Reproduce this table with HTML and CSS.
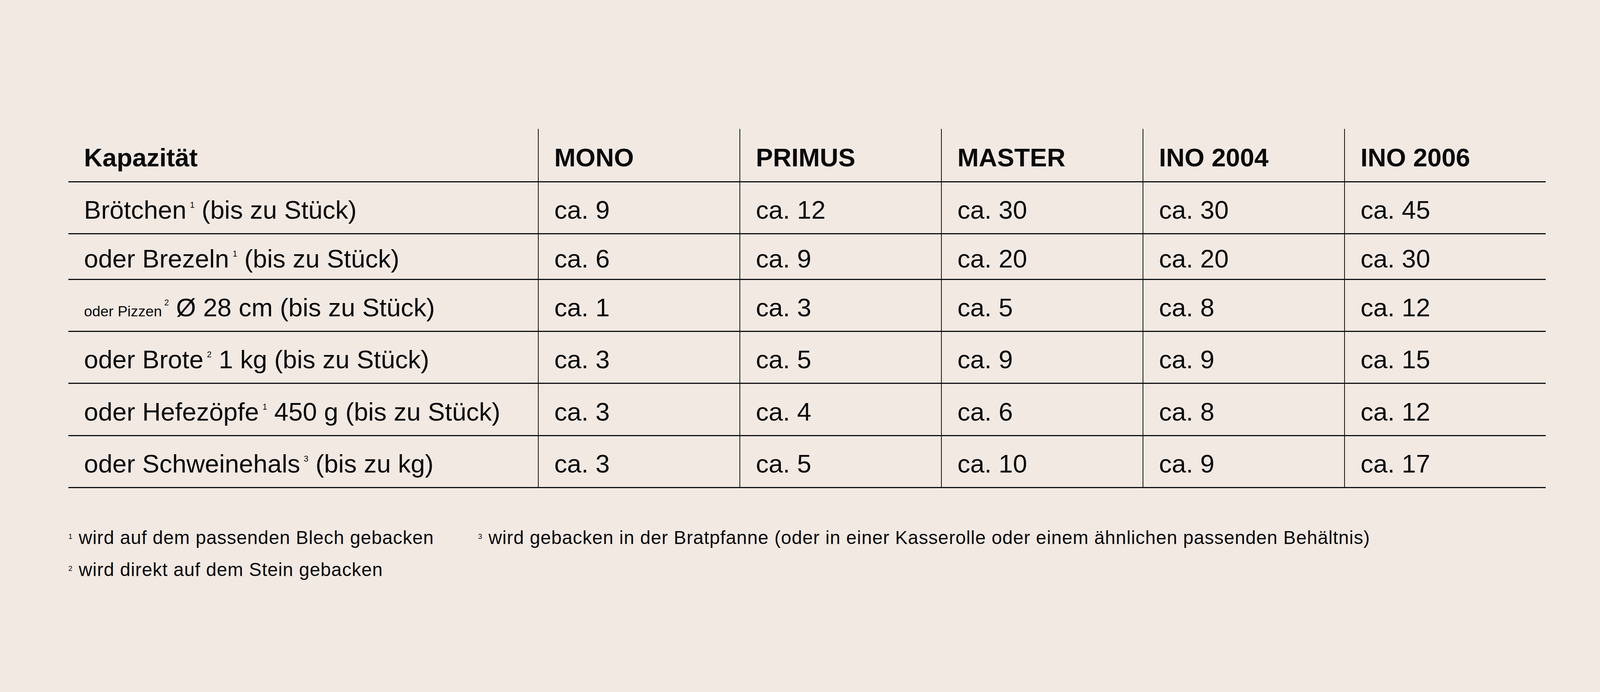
FILE: index.html
```html
<!DOCTYPE html>
<html lang="de">
<head>
<meta charset="utf-8">
<title>Kapazität</title>
<link rel="stylesheet" href="styles.css">
</head>
<body>
<main class="page">
  <table class="spec">
    <colgroup>
      <col class="col-label">
      <col><col><col><col><col>
    </colgroup>
    <thead>
      <tr>
        <th>Kapazität</th>
        <th>MONO</th>
        <th>PRIMUS</th>
        <th>MASTER</th>
        <th>INO 2004</th>
        <th>INO 2006</th>
      </tr>
    </thead>
    <tbody>
      <tr>
        <td>Brötchen<sup class="fn">1</sup> (bis zu Stück)</td>
        <td>ca. 9</td><td>ca. 12</td><td>ca. 30</td><td>ca. 30</td><td>ca. 45</td>
      </tr>
      <tr class="compact">
        <td>oder Brezeln<sup class="fn">1</sup> (bis zu Stück)</td>
        <td>ca. 6</td><td>ca. 9</td><td>ca. 20</td><td>ca. 20</td><td>ca. 30</td>
      </tr>
      <tr>
        <td><span class="small">oder Pizzen</span><sup class="fn fn-tight">2</sup> Ø 28 cm (bis zu Stück)</td>
        <td>ca. 1</td><td>ca. 3</td><td>ca. 5</td><td>ca. 8</td><td>ca. 12</td>
      </tr>
      <tr>
        <td>oder Brote<sup class="fn">2</sup> 1 kg (bis zu Stück)</td>
        <td>ca. 3</td><td>ca. 5</td><td>ca. 9</td><td>ca. 9</td><td>ca. 15</td>
      </tr>
      <tr class="tall">
        <td>oder Hefezöpfe<sup class="fn">1</sup> 450 g (bis zu Stück)</td>
        <td>ca. 3</td><td>ca. 4</td><td>ca. 6</td><td>ca. 8</td><td>ca. 12</td>
      </tr>
      <tr>
        <td>oder Schweinehals<sup class="fn">3</sup> (bis zu kg)</td>
        <td>ca. 3</td><td>ca. 5</td><td>ca. 10</td><td>ca. 9</td><td>ca. 17</td>
      </tr>
    </tbody>
  </table>

  <div class="notes">
    <div class="notes-col">
      <p class="note"><sup class="note-num">1</sup> wird auf dem passenden Blech gebacken</p>
      <p class="note"><sup class="note-num">2</sup> wird direkt auf dem Stein gebacken</p>
    </div>
    <div class="notes-col">
      <p class="note"><sup class="note-num">3</sup> wird gebacken in der Bratpfanne (oder in einer Kasserolle oder einem ähnlichen passenden Behältnis)</p>
    </div>
  </div>
</main>
</body>
</html>
```

FILE: styles.css
```css
html, body {
  margin: 0;
  padding: 0;
  background: #f2e9e3;
}

body {
  font-family: "Liberation Sans", Arial, sans-serif;
  color: #0a0a0a;
  overflow: hidden;
}

.page {
  width: 100%;
  height: 1772px;
  box-sizing: border-box;
  padding: 330px 0 0 175px;
}

.spec {
  width: 3782px;
  table-layout: fixed;
  border-collapse: separate;
  border-spacing: 0;
}

.col-label {
  width: 1202px;
}

.spec th,
.spec td {
  box-sizing: border-box;
  height: 133px;
  padding: 0 0 17px 40px;
  vertical-align: bottom;
  text-align: left;
  font-size: 65.5px;
  line-height: 85px;
  font-weight: normal;
  white-space: nowrap;
  border-bottom: 3px solid #111;
}

.spec th + th,
.spec td + td {
  border-left: 2px solid #111;
}

.spec thead th {
  height: 137px;
  padding-bottom: 18px;
  font-weight: bold;
}

.spec tr.compact td {
  height: 117px;
  padding-bottom: 9px;
}

.spec tr.tall td {
  height: 134px;
}

.fn {
  font-size: 21.5px;
  line-height: 0;
  vertical-align: 28px;
  margin-left: 9px;
}

.fn-tight {
  margin-left: 6px;
}

.small {
  font-size: 37.8px;
  line-height: 0;
}

.notes {
  display: grid;
  grid-template-columns: 1049px auto;
  margin-top: 86px;
}

.note {
  margin: 0;
  font-size: 47.8px;
  line-height: 82px;
  letter-spacing: 0.95px;
  white-space: nowrap;
}

.note-num {
  font-size: 18.5px;
  line-height: 0;
  vertical-align: 13px;
  letter-spacing: 0;
  margin-right: 2px;
}
```
